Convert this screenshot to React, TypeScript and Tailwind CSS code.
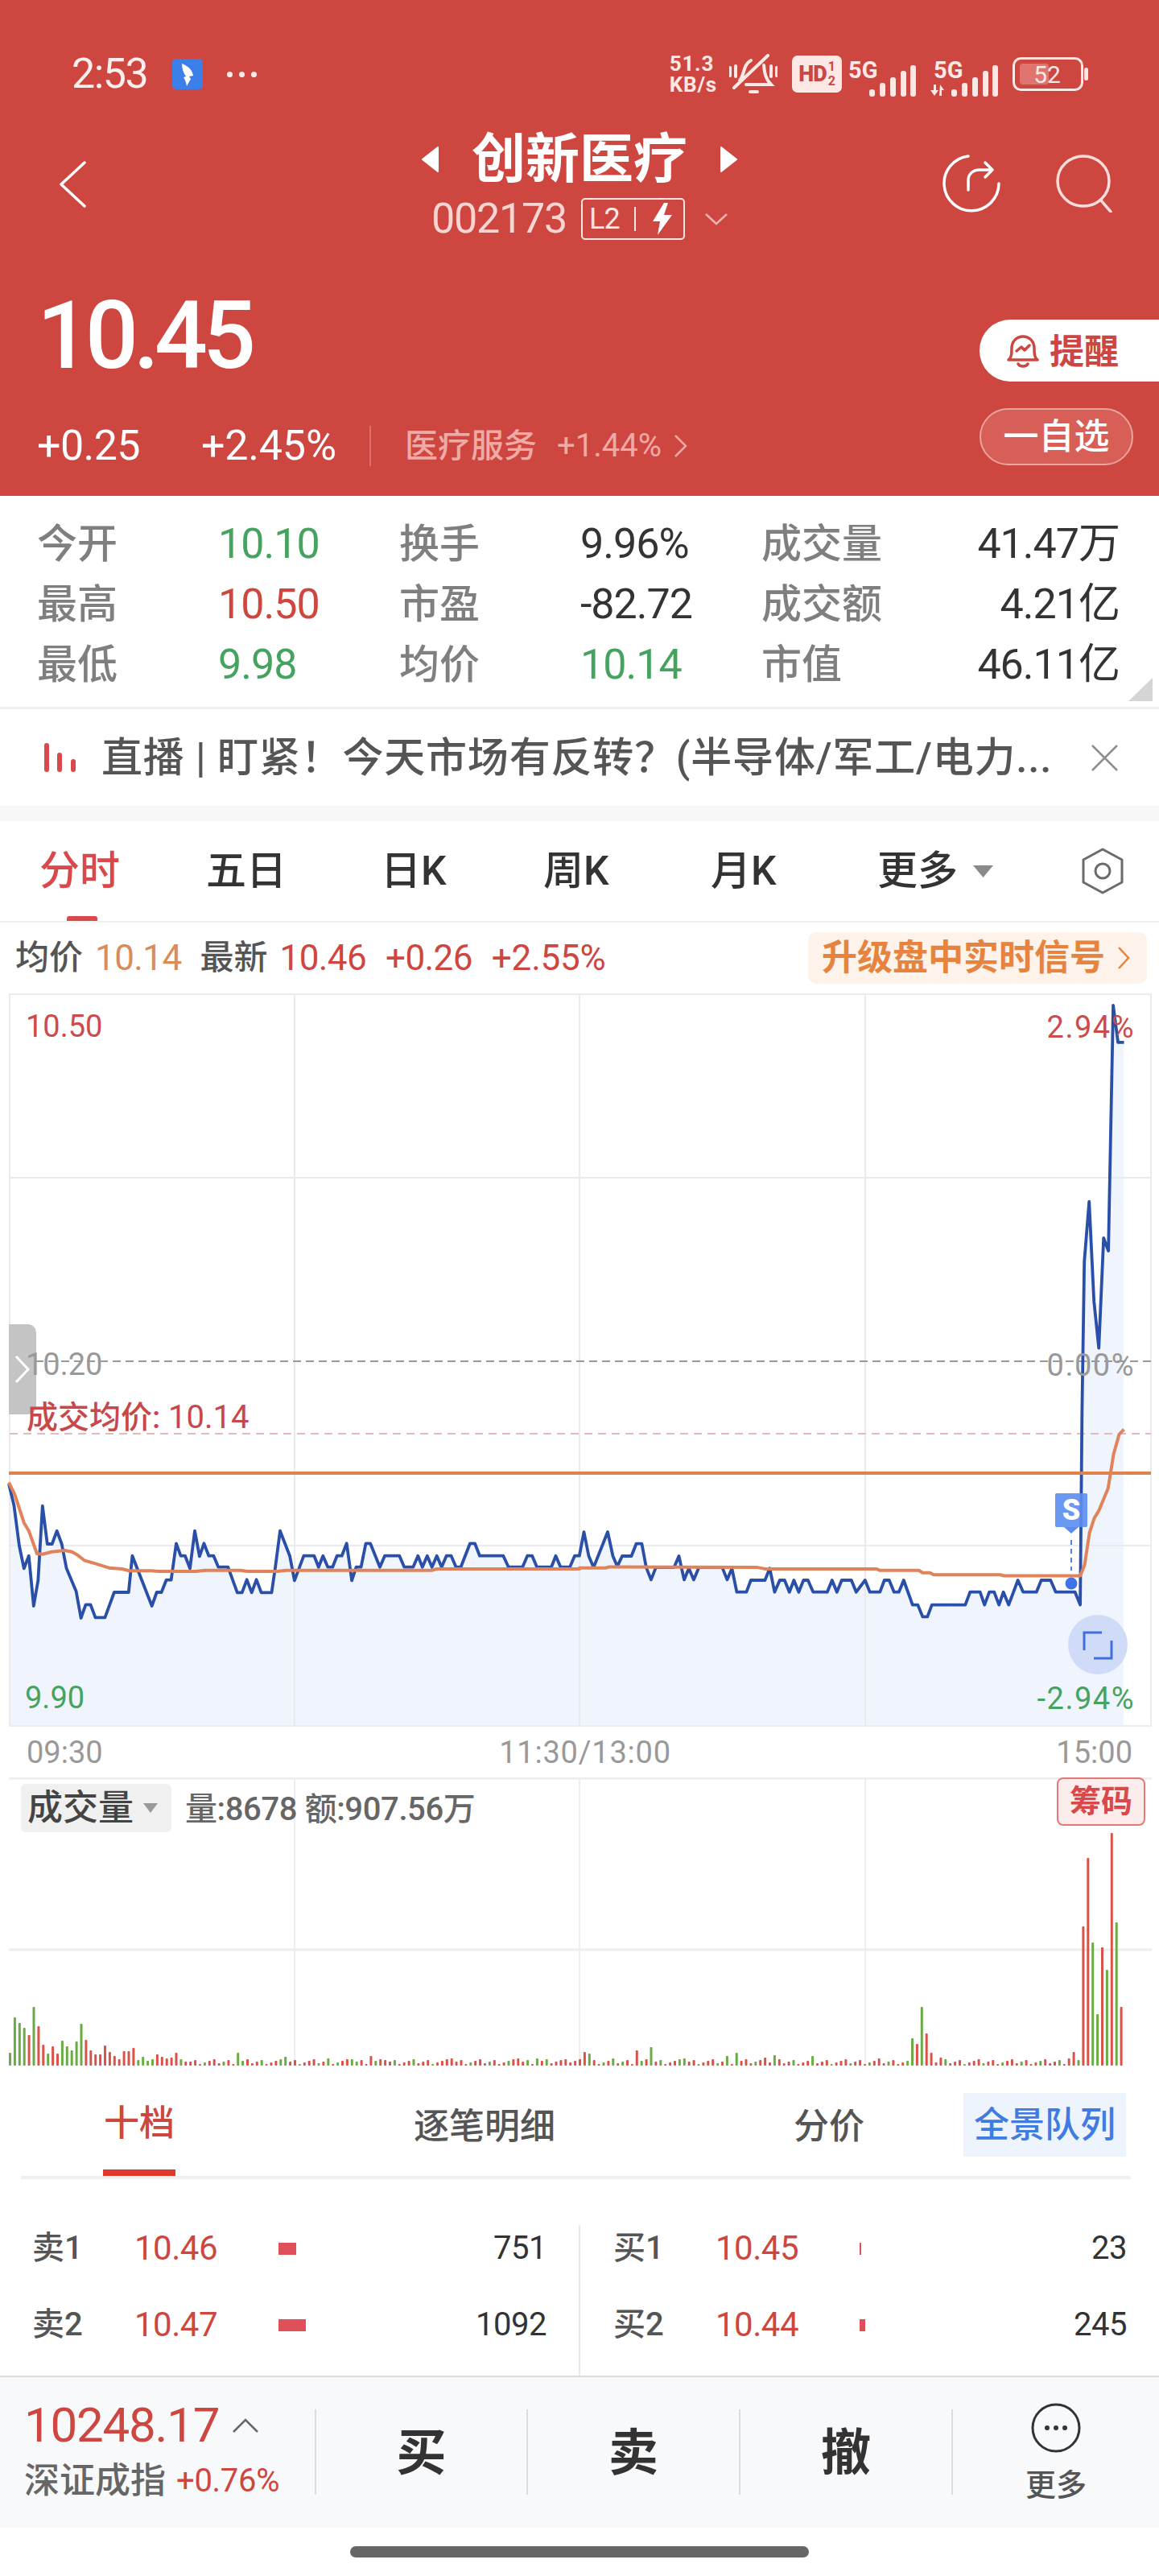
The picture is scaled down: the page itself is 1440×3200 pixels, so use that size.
import React from 'react'

const RED = '#cd463f'

// traced from the intraday chart, [x, y] in page pixels
const leftTrace = [
  [24, 190], [38, 270], [52, 420], [65, 505], [78, 458], [91, 645], [103, 550], [115, 272], [128, 414], [141, 414], [154, 365], [167, 414], [180, 505], [206, 590], [219, 690], [232, 640], [245, 640], [258, 688], [284, 688], [309, 594], [348, 594], [358, 458], [411, 645], [424, 594], [437, 594], [450, 548], [463, 548], [477, 412], [489, 458], [501, 458], [514, 505], [527, 365], [540, 460], [552, 412], [565, 458], [578, 458], [591, 500], [617, 500], [642, 595], [655, 595], [668, 547], [681, 595], [694, 547], [707, 595], [735, 595], [745, 500], [758, 365], [784, 458], [797, 550], [822, 458], [850, 458], [862, 500], [874, 458], [887, 500], [900, 500], [912, 458], [925, 458], [938, 412], [952, 550], [964, 500], [977, 500], [990, 412], [1002, 412], [1028, 500], [1041, 458], [1081, 458], [1094, 500], [1118, 500], [1131, 458], [1143, 500], [1156, 458], [1169, 500], [1182, 458], [1195, 500], [1208, 458], [1221, 458], [1234, 500], [1247, 500], [1272, 412], [1285, 412], [1298, 458], [1362, 458], [1376, 500], [1414, 500], [1427, 458], [1440, 458], [1453, 500], [1492, 500], [1504, 458], [1517, 500], [1542, 500], [1555, 458], [1568, 458],
].map(([x, y]) => [x / 2.178, 1780 + y / 3])

const rightTrace = [
  [0, 1195], [12, 1148], [25, 1197], [38, 1220], [76, 1148], [90, 1197], [102, 1218], [115, 1197], [140, 1197], [153, 1172], [168, 1172], [180, 1220], [193, 1245], [206, 1220], [255, 1220], [268, 1197], [282, 1245], [295, 1222], [308, 1245], [322, 1220], [385, 1220], [398, 1245], [411, 1222], [424, 1270], [450, 1270], [462, 1246], [500, 1246], [513, 1222], [526, 1270], [540, 1246], [553, 1246], [566, 1270], [578, 1246], [591, 1270], [604, 1246], [616, 1246], [630, 1270], [668, 1270], [681, 1246], [694, 1270], [707, 1246], [733, 1246], [746, 1270], [770, 1246], [783, 1270], [810, 1270], [822, 1246], [835, 1246], [848, 1270], [861, 1270], [874, 1246], [898, 1296], [912, 1296], [925, 1320], [938, 1320], [950, 1296], [1040, 1296], [1053, 1270], [1080, 1270], [1092, 1296], [1105, 1270], [1118, 1270], [1131, 1296], [1143, 1270], [1157, 1296], [1182, 1246], [1196, 1270], [1232, 1270], [1245, 1246], [1270, 1246], [1284, 1270], [1336, 1270], [1350, 1296], [1355, 900], [1361, 600], [1374, 478], [1387, 680], [1400, 775], [1413, 552], [1426, 578], [1439, 80], [1452, 155], [1468, 155],
].map(([x, y]) => [720 + x / 2.17, 1200 + y / 1.633])

const avgLeft = [
  [24, 185], [40, 230], [65, 335], [78, 365], [100, 450], [115, 452], [140, 443], [175, 438], [195, 443], [210, 455], [228, 475], [260, 488], [295, 503], [330, 507], [350, 514], [410, 514], [430, 516], [530, 516], [555, 512], [650, 512], [670, 516], [750, 516], [775, 512], [1170, 512], [1182, 507], [1568, 507],
].map(([x, y]) => [x / 2.178, 1780 + y / 3])

const avgRight = [
  [0, 1221], [70, 1221], [80, 1219], [480, 1220], [500, 1223], [800, 1223], [810, 1226], [915, 1226], [925, 1231], [945, 1231], [955, 1235], [1135, 1235], [1145, 1237], [1350, 1237], [1362, 1215], [1375, 1150], [1388, 1120], [1400, 1105], [1425, 1060], [1440, 990], [1455, 950], [1468, 940],
].map(([x, y]) => [720 + x / 2.17, 1200 + y / 1.633])

const toPoints = (pts: number[][]) => pts.map(([x, y]) => `${x.toFixed(1)},${y.toFixed(1)}`).join(' ')

const priceLine = [...leftTrace, ...rightTrace]
const avgLine = [...avgLeft, ...avgRight]

// [height, green?]
const openBars: [number, number][] = [
  [16, 1], [60, 1], [53, 1], [47, 1], [38, 0], [73, 1], [49, 0], [26, 0], [15, 1], [24, 0], [15, 0], [31, 1], [24, 1], [19, 1], [30, 1], [52, 1], [32, 0], [19, 0], [14, 0], [14, 0], [25, 0], [17, 0], [12, 0], [8, 0], [18, 0], [18, 0], [22, 0], [7, 1], [11, 1], [6, 1], [8, 1], [14, 0], [11, 0], [9, 0], [10, 0], [16, 0], [8, 1], [5, 0],
]

const spikes: Record<number, [number, number]> = {
  48: [16, 1], 58: [11, 1], 67: [9, 1], 72: [8, 1], 76: [12, 0], 79: [7, 0], 93: [9, 0], 107: [9, 0], 111: [9, 1], 117: [8, 0], 121: [17, 0], 122: [15, 1], 127: [9, 1], 132: [19, 0], 135: [23, 1], 142: [9, 1], 151: [12, 1], 153: [16, 1], 159: [10, 0], 161: [13, 1], 169: [12, 1], 183: [9, 0], 190: [34, 1], 191: [27, 0], 192: [73, 1], 193: [40, 0], 194: [16, 0], 196: [10, 0], 223: [9, 0], 224: [17, 0], 225: [7, 1], 226: [173, 0], 227: [258, 0], 228: [153, 1], 229: [64, 1], 230: [147, 0], 231: [119, 1], 232: [289, 0], 233: [178, 1], 234: [73, 0],
}

const volumeBars = Array.from({ length: 235 }, (_, i) => {
  if (i < openBars.length) return openBars[i]
  if (spikes[i]) return spikes[i]
  return [2 + ((i * 37 + 11) % 7), i % 4 === 1 ? 1 : 0] as [number, number]
})

const stats = [
  ['今开', '10.10', 'text-[#46a35f]', '换手', '9.96%', 'text-[#333333]', '成交量', '41.47万'],
  ['最高', '10.50', 'text-[#cd463f]', '市盈', '-82.72', 'text-[#333333]', '成交额', '4.21亿'],
  ['最低', '9.98', 'text-[#46a35f]', '均价', '10.14', 'text-[#46a35f]', '市值', '46.11亿'],
]

const asks = [
  { label: '卖1', price: '10.46', bar: 'w-[22px]', qty: '751' },
  { label: '卖2', price: '10.47', bar: 'w-[34px]', qty: '1092' },
]

const bids = [
  { label: '买1', price: '10.45', bar: 'w-[2px]', qty: '23' },
  { label: '买2', price: '10.44', bar: 'w-[7px]', qty: '245' },
]

function Signal({ arrows }: { arrows?: boolean }) {
  return (
    <svg className="mt-[8px]" width="84" height="58" viewBox="0 -8 84 58" fill="#fde8e6">
      <text x={arrows ? 4 : 0} y="22" fontSize="29" fontWeight="700" fontFamily="Roboto, sans-serif">5G</text>
      {arrows && <path d="M0 37h4v-7h3v7h3l-5 7zM12 30l5 7h-3v7h-3z" />}
      <rect x="26" y="36" width="7" height="9" rx="3" />
      <rect x="39" y="28" width="7" height="17" rx="3" />
      <rect x="52" y="21" width="7" height="24" rx="3" />
      <rect x="65" y="13" width="7" height="32" rx="3" />
      <rect x="77" y="6" width="7" height="39" rx="3" />
    </svg>
  )
}

function StatusBar() {
  return (
    <div className="flex h-[56px] items-center justify-between pl-[89px] pr-[88px]">
      <div className="flex items-center">
        <span className="text-[52px] leading-none tracking-[-1.5px] text-[#fdeeee]">2:53</span>
        <svg className="ml-[31px]" width="38" height="38" viewBox="0 0 38 38">
          <rect width="38" height="38" rx="5" fill="#3d7fe8" />
          <path d="M12 6c8 3 13 8 14 15l-5 1 2 3-5 9c-1-5-2-8-4-11l3-1c-3-4-5-10-5-16z" fill="#fff" />
        </svg>
        <div className="ml-[30px] flex gap-[8px]">
          <span className="size-[7px] rounded-full bg-[#fdeeee]" />
          <span className="size-[7px] rounded-full bg-[#fdeeee]" />
          <span className="size-[7px] rounded-full bg-[#fdeeee]" />
        </div>
      </div>
      <div className="flex items-center text-[#fde8e6]">
        <div className="flex flex-col text-[26px] font-bold leading-[26px] tracking-[0.8px]">
          <span>51.3</span>
          <span>KB/s</span>
        </div>
        <svg className="ml-[15px]" width="60" height="50" viewBox="0 0 60 50" fill="none" stroke="#fde8e6" strokeWidth="4" strokeLinecap="round">
          <path d="M6 42 48 2M13 33c6-6 4-20 14-25M43 14c1 10 2 17 9 24H21M26 47h9M1 17v10M8 15v13M52 15v13M59 17v10" />
        </svg>
        <div className="ml-[18px] flex h-[46px] w-[62px] items-center justify-center rounded-[7px] bg-[#fde8e6] text-[#cd463f]">
          <span className="text-[27px] font-black leading-none tracking-[-1px]">HD</span>
          <span className="ml-[2px] flex flex-col text-[16px] font-bold leading-[18px]">
            <span>1</span>
            <span>2</span>
          </span>
        </div>
        <div className="ml-[8px] flex">
          <Signal />
        </div>
        <div className="ml-[18px] flex">
          <Signal arrows />
        </div>
        <svg className="ml-[18px]" width="94" height="42" viewBox="0 0 94 42" fill="none">
          <rect x="1.5" y="1.5" width="85" height="39" rx="9" stroke="#fde8e6" strokeWidth="3" />
          <rect x="9" y="8" width="36" height="26" rx="4" fill="#e0756f" />
          <text x="43" y="32" textAnchor="middle" fontSize="30" fill="#fde8e6" fontFamily="Roboto, sans-serif">52</text>
          <rect x="89" y="13" width="5" height="16" rx="2.5" fill="#fde8e6" />
        </svg>
      </div>
    </div>
  )
}

function NavBar() {
  return (
    <div className="mt-[46px] grid h-[132px] grid-cols-[1fr_auto_1fr]">
      <div className="pl-[73px] pt-[34px]">
        <svg width="34" height="58" viewBox="0 0 34 58" fill="none" stroke="#fff" strokeWidth="3.5" strokeLinecap="round" strokeLinejoin="round">
          <path d="M32 2 3 29l29 27" />
        </svg>
      </div>
      <div className="flex flex-col items-center">
        <div className="flex h-[62px] items-center pt-[2px]">
          <svg width="22" height="32" viewBox="0 0 22 32" fill="#fff"><path d="M20 1 1 16l19 15z" stroke="#fff" strokeLinejoin="round" strokeWidth="2" /></svg>
          <span className="mx-[40px] text-[67px] font-bold leading-none">创新医疗</span>
          <svg width="22" height="32" viewBox="0 0 22 32" fill="#fff"><path d="M2 1l19 15L2 31z" stroke="#fff" strokeLinejoin="round" strokeWidth="2" /></svg>
        </div>
        <div className="mt-[18px] flex items-center">
          <span className="text-[52px] leading-none tracking-[-1.2px] text-[#f8d5d2]">002173</span>
          <div className="ml-[18px] flex h-[52px] w-[129px] items-center rounded-[5px] border-2 border-[#fde8e6] pl-[8px] text-[#fde8e6]">
            <span className="text-[36px] leading-none tracking-[-1px]">L2</span>
            <span className="ml-[18px] h-[30px] w-[2px] bg-[#fde8e6]" />
            <svg className="ml-[20px]" width="26" height="40" viewBox="0 0 26 40" fill="#fff"><path d="M15 0 1 23h9l-3 17 18-25h-10l5-15z" /></svg>
          </div>
          <svg className="ml-[25px]" width="28" height="15" viewBox="0 0 28 15" fill="none" stroke="#f0b3ae" strokeWidth="2.5"><path d="m1 1 13 12L27 1" /></svg>
        </div>
      </div>
      <div className="flex justify-end gap-[69px] pr-[58px] pt-[26px]">
        <svg width="74" height="72" viewBox="0 0 74 72" fill="none" stroke="#fff" strokeWidth="3.5" strokeLinecap="round" strokeLinejoin="round">
          <path d="M34 2A34 34 0 1 0 72 36" />
          <path d="M34 44V32c0-8 6-13 14-13h16M55 10l9 9-9 9" />
        </svg>
        <svg width="70" height="72" viewBox="0 0 70 72" fill="none" stroke="#fbdcda" strokeWidth="3.5" strokeLinecap="round">
          <ellipse cx="34" cy="33" rx="32" ry="31" />
          <path d="m56 57 12 14" />
        </svg>
      </div>
    </div>
  )
}

function QuoteHeader() {
  return (
    <div className="mt-[66px] flex justify-between">
      <div className="pl-[46px]">
        <div className="h-[106px] text-[116px] font-medium leading-[106px] tracking-[-6px]">10.45</div>
        <div className="mt-[59px] flex h-[50px] items-center">
          <span className="w-[204px] text-[52px] leading-none tracking-[-0.6px]">+0.25</span>
          <span className="w-[209px] text-[52px] leading-none tracking-[-0.2px]">+2.45%</span>
          <span className="h-[50px] w-[2px] bg-[#dd706a]" />
          <span className="ml-[42px] text-[41px] font-medium leading-none text-[#efaaa5]">医疗服务</span>
          <span className="ml-[25px] text-[40px] leading-none text-[#efaaa5]">+1.44%</span>
          <svg className="ml-[16px]" width="16" height="28" viewBox="0 0 16 28" fill="none" stroke="#efaaa5" strokeWidth="2.5"><path d="m1 1 13 13L1 27" /></svg>
        </div>
      </div>
      <div className="flex w-[223px] flex-col items-start pt-[33px]">
        <div className="flex h-[77px] w-full items-center rounded-l-[38px] bg-white pl-[32px]">
          <svg width="44" height="42" viewBox="0 0 44 42" fill="none" stroke="#cd463f" strokeWidth="3.5" strokeLinejoin="round" strokeLinecap="round">
            <path d="M4 32c4-3 4-8 4-14 0-9 6-15 14-15s14 6 14 15c0 6 0 11 4 14zM16 37c2 4 10 4 12 0M14 21l6-5 4 4 6-6" />
          </svg>
          <span className="ml-[11px] mt-[4px] text-[43px] font-bold leading-none text-[#cd463f]">提醒</span>
        </div>
        <div className="mt-[33px] flex h-[71px] w-[191px] items-center justify-center rounded-full border-2 border-[#eba5a0] bg-[#d85f58] text-[44px] font-medium leading-none">
          一自选
        </div>
      </div>
    </div>
  )
}

function Stats() {
  return (
    <div className="relative h-[265px] border-b-[3px] border-[#f0f0f0] bg-white pl-[46px] pr-[49px] pt-[22px]">
      {stats.map((row) => (
        <div key={row[0]} className="grid h-[75px] grid-cols-[225px_225px_225px_225px_1fr_auto] items-center text-[52px] leading-none tracking-[-1px]">
          <span className="text-[50px] font-medium tracking-normal text-[#7f7f7f]">{row[0]}</span>
          <span className={row[2]}>{row[1]}</span>
          <span className="text-[50px] font-medium tracking-normal text-[#7f7f7f]">{row[3]}</span>
          <span className={row[5]}>{row[4]}</span>
          <span className="text-[50px] font-medium tracking-normal text-[#7f7f7f]">{row[6]}</span>
          <span className="text-right text-[#333333]">{row[7]}</span>
        </div>
      ))}
      <svg className="absolute bottom-[7px] right-[8px]" width="30" height="29" viewBox="0 0 30 29" fill="#d5d5d5">
        <path d="M30 0v29H0z" />
      </svg>
    </div>
  )
}

function NewsBar() {
  return (
    <div className="flex h-[120px] items-center bg-white pl-[55px]">
      <svg width="40" height="36" viewBox="0 0 40 36" fill="#d9484a">
        <rect x="0" width="6" height="36" rx="3" />
        <rect x="16" y="12" width="6" height="24" rx="3" />
        <rect x="33" y="20" width="6" height="16" rx="3" />
      </svg>
      <span className="ml-[31px] w-[1190px] whitespace-nowrap text-[51px] font-medium leading-none tracking-[0.8px] text-[#555555]">
        直播 | 盯紧！今天市场有反转？(半导体/军工/电力...
      </span>
      <svg className="ml-[40px]" width="33" height="33" viewBox="0 0 33 33" fill="none" stroke="#8e8e8e" strokeWidth="2.5">
        <path d="m1 1 31 31M32 1 1 32" />
      </svg>
    </div>
  )
}

function PeriodTabs() {
  return (
    <div className="relative grid h-[126px] grid-cols-[207px_217px_202px_208px_207px_250px_auto] items-center border-b-2 border-[#eeeeee] bg-white pl-[49px] text-[50px] font-medium leading-none text-[#333333]">
      <span className="text-[#d9484a]">分时</span>
      <span>五日</span>
      <span>日K</span>
      <span>周K</span>
      <span>月K</span>
      <span className="flex items-center">
        更多
        <svg className="ml-[19px]" width="25" height="15" viewBox="0 0 25 15" fill="#8a8a8a"><path d="M0 0h25L12.5 15z" /></svg>
      </span>
      <svg className="ml-[3px]" width="54" height="58" viewBox="0 0 54 58" fill="none" stroke="#6b6b6b" strokeWidth="3" strokeLinejoin="round">
        <path d="M27 2 51 15v28L27 56 3 43V15z" />
        <circle cx="27" cy="29" r="9" />
      </svg>
      <span className="absolute bottom-0 left-[83px] h-[6px] w-[38px] rounded-t-[3px] bg-[#d9484a]" />
    </div>
  )
}

function QuoteLine() {
  return (
    <div className="flex h-[88px] items-center justify-between pl-[19px] pr-[15px] text-[42px] leading-none">
      <div className="flex items-center">
        <span className="font-medium text-[#555555]">均价</span>
        <span className="ml-[15px] text-[44px] tracking-[-0.6px] text-[#d98c58]">10.14</span>
        <span className="ml-[23px] font-medium text-[#555555]">最新</span>
        <span className="ml-[15px] text-[44px] tracking-[-0.6px] text-[#cd463f]">10.46</span>
        <span className="ml-[24px] text-[44px] tracking-[-0.6px] text-[#cd463f]">+0.26</span>
        <span className="ml-[24px] text-[44px] tracking-[-0.2px] text-[#cd463f]">+2.55%</span>
      </div>
      <div className="flex h-[64px] w-[421px] items-center rounded-[10px] bg-[#fdf3ea] pl-[17px] text-[44px] font-bold text-[#e6843f]">
        升级盘中实时信号
        <svg className="ml-[16px]" width="15" height="28" viewBox="0 0 15 28" fill="none" stroke="#e6843f" strokeWidth="2.5"><path d="m1 1 12 13L1 27" /></svg>
      </div>
    </div>
  )
}

function IntradayChart() {
  const fillPath = `11,2144 ${toPoints(priceLine)} 1396,2144`
  return (
    <div className="relative h-[911px] bg-white">
      <svg className="block" width="1440" height="911" viewBox="0 1234 1440 911" fill="none">
        <polygon points={fillPath} fill="#eff4fd" />
        <rect x="12" y="1235" width="1418" height="909" stroke="#ececec" strokeWidth="2" />
        <path d="M366 1235v909M720 1235v909M1075 1235v909M12 1463h1418M12 1920h1418" stroke="#e8eaee" strokeWidth="2" />
        <path d="M12 1691h1418" stroke="#999999" strokeWidth="2" strokeDasharray="10 6" />
        <path d="M12 1781h1418" stroke="#e3b9b9" strokeWidth="2" strokeDasharray="10 7" />
        <polyline points={toPoints(priceLine)} stroke="#2a4fa8" strokeWidth="3.8" strokeLinejoin="round" />
        <path d="M11 1830h1419" stroke="#e0834a" strokeWidth="4" />
        <polyline points={toPoints(avgLine)} stroke="#e0835a" strokeWidth="4" strokeLinejoin="round" />
        <path d="M1322 1897h18l-9 8z" fill="#5b8def" />
        <path d="M1331 1913v38" stroke="#4f7fe8" strokeWidth="2" strokeDasharray="6 5" />
        <ellipse cx="1331" cy="1967" rx="7.5" ry="7.5" fill="#3f73e8" />
        <circle cx="1364" cy="2043" r="37" fill="#d0dcf7" />
        <path d="M1347 2050v-22h22M1381 2038v22h-22" stroke="#3f6fe0" strokeWidth="3" />
      </svg>
      <span className="absolute left-[32px] top-[22px] text-[38px] leading-none text-[#cd4a4d]">10.50</span>
      <span className="absolute right-[30px] top-[23px] text-[38px] leading-none tracking-[1.5px] text-[#cd4a4d]">2.94%</span>
      <span className="absolute left-[11px] top-[411px] flex h-[112px] w-[34px] items-center justify-center rounded-r-[10px] bg-[#c4c4c4]">
        <svg width="20" height="36" viewBox="0 0 20 36" fill="none" stroke="#fff" strokeWidth="3"><path d="m2 2 15 16L2 34" /></svg>
      </span>
      <span className="absolute left-[32px] top-[442px] text-[38px] leading-none text-[#999999]">10.20</span>
      <span className="absolute right-[30px] top-[443px] text-[38px] leading-none tracking-[1.5px] text-[#999999]">0.00%</span>
      <span className="absolute left-[33px] top-[507px] text-[39px] font-medium leading-none text-[#c8474a]">
        成交均价: <span className="text-[40px] font-normal">10.14</span>
      </span>
      <span className="absolute left-[1311px] top-[621px] flex h-[42px] w-[40px] items-center justify-center rounded-[2px] bg-[#5b8def]/90 text-[36px] font-black leading-none text-white">
        S
      </span>
      <span className="absolute left-[31px] top-[856px] text-[38px] leading-none text-[#46a35f]">9.90</span>
      <span className="absolute right-[30px] top-[857px] text-[38px] leading-none tracking-[1.5px] text-[#46a35f]">-2.94%</span>
    </div>
  )
}

function TimeAxis() {
  return (
    <div className="flex h-[63px] items-center justify-between bg-white pl-[33px] pr-[33px] text-[38px] leading-none text-[#999999]">
      <span>09:30</span>
      <span className="ml-[14px] tracking-[0.8px]">11:30/13:00</span>
      <span>15:00</span>
    </div>
  )
}

function VolumeChart() {
  return (
    <div className="relative h-[358px] bg-white">
      <svg className="block" width="1440" height="358" viewBox="0 2208 1440 358" fill="none">
        <path d="M11 2209h1420M11 2422h1420" stroke="#eeeeee" strokeWidth="3" />
        <path d="M366 2208v358M720 2208v358M1075 2208v358" stroke="#eeeeee" strokeWidth="2" />
        {volumeBars.map(([h, green], i) => (
          <rect key={i} x={11 + i * 5.9} y={2566 - h} width="3" height={h} rx="1" fill={green ? '#6aab45' : '#d9534a'} />
        ))}
      </svg>
      <div className="absolute left-[26px] top-[8px] flex h-[60px] w-[187px] items-center rounded-[6px] bg-[#f0f0f0] pl-[8px] text-[44px] font-medium leading-none text-[#444444]">
        成交量
        <svg className="ml-[12px]" width="18" height="12" viewBox="0 0 18 12" fill="#999999"><path d="M0 0h18L9 12z" /></svg>
      </div>
      <span className="absolute left-[230px] top-[20px] text-[40px] font-medium leading-none tracking-[-0.4px] text-[#666666]">量:8678 额:907.56万</span>
      <span className="absolute left-[1313px] top-0 flex h-[60px] w-[110px] items-center justify-center rounded-[8px] border-2 border-[#e57777] bg-[#fdecec] text-[39px] font-bold leading-none text-[#d9484a]">
        筹码
      </span>
    </div>
  )
}

function DepthTabs() {
  return (
    <div className="h-[141px] bg-white pt-[34px]">
      <div className="ml-[26px] mr-[35px] flex h-[107px] items-start border-b-4 border-[#f0f0f0] pl-[102px] text-[44px] font-medium leading-none text-[#555555]">
        <span className="flex h-[103px] w-[90px] justify-center border-b-8 border-[#e0392b] pt-[16px] text-[#cd463f]">十档</span>
        <span className="ml-[296px] mt-[20px] w-[175px] whitespace-nowrap">逐笔明细</span>
        <span className="ml-[297px] mt-[20px] w-[84px] whitespace-nowrap">分价</span>
        <span className="ml-[127px] flex h-[79px] w-[202px] items-center justify-center bg-[#eef4fd] text-[#3f7be0]">全景队列</span>
      </div>
    </div>
  )
}

function DepthRow({ row }: { row: { label: string; price: string; bar: string; qty: string } }) {
  return (
    <div className="grid h-[58px] grid-cols-[127px_179px_1fr_auto] items-center leading-none">
      <span className="text-[40px] font-medium text-[#555555]">{row.label}</span>
      <span className="text-[42px] tracking-[-0.5px] text-[#cd463f]">{row.price}</span>
      <span className={`h-[15px] bg-[#e0505a] ${row.bar}`} />
      <span className="text-[40px] tracking-[-0.5px] text-[#333333]">{row.qty}</span>
    </div>
  )
}

function Depth() {
  return (
    <div className="flex h-[244px] bg-white pt-[57px]">
      <div className="flex w-[721px] flex-col gap-[37px] border-r-2 border-[#e8e8e8] pl-[40px] pr-[40px]">
        {asks.map((row) => (
          <DepthRow key={row.label} row={row} />
        ))}
      </div>
      <div className="flex flex-1 flex-col gap-[37px] pl-[41px] pr-[40px]">
        {bids.map((row) => (
          <DepthRow key={row.label} row={row} />
        ))}
      </div>
    </div>
  )
}

function ActionBar() {
  return (
    <div className="flex h-[189px] items-start border-t-2 border-[#dddddd] bg-[#f8f9fb] pt-[40px]">
      <div className="flex h-[106px] w-[391px] flex-col pl-[30px]">
        <div className="-mt-[9px] flex items-center">
          <span className="text-[60px] leading-[58px] tracking-[-1.2px] text-[#cd463f]">10248.17</span>
          <svg className="ml-[17px]" width="32" height="18" viewBox="0 0 32 18" fill="none" stroke="#666666" strokeWidth="2.5"><path d="m1 17 15-15 15 15" /></svg>
        </div>
        <div className="mt-[18px] flex items-center leading-none">
          <span className="text-[44px] font-medium text-[#666666]">深证成指</span>
          <span className="ml-[13px] text-[40px] tracking-[-0.3px] text-[#cd463f]">+0.76%</span>
        </div>
      </div>
      <div className="flex h-[106px] w-[263px] items-center justify-center border-l-2 border-[#dddddd] pt-[4px] text-[62px] font-bold leading-none text-[#333333]">买</div>
      <div className="flex h-[106px] w-[264px] items-center justify-center border-l-2 border-[#dddddd] pt-[4px] text-[62px] font-bold leading-none text-[#333333]">卖</div>
      <div className="flex h-[106px] w-[264px] items-center justify-center border-l-2 border-[#dddddd] pt-[4px] text-[62px] font-bold leading-none text-[#333333]">撤</div>
      <div className="flex h-[106px] flex-1 flex-col items-center border-l-2 border-[#dddddd]">
        <svg className="-mt-[8px] shrink-0" width="62" height="62" viewBox="0 0 62 62" fill="none">
          <circle cx="31" cy="31" r="29" stroke="#333333" strokeWidth="3" />
          <circle cx="20" cy="31" r="3" fill="#333333" />
          <circle cx="31" cy="31" r="3" fill="#333333" />
          <circle cx="42" cy="31" r="3" fill="#333333" />
        </svg>
        <span className="mt-[21px] shrink-0 text-[38px] font-medium leading-none text-[#555555]">更多</span>
      </div>
    </div>
  )
}

export default function App() {
  return (
    <div className="h-[3200px] w-[1440px] overflow-hidden bg-white font-['Roboto','Noto_Sans_CJK_SC',sans-serif]">
      <header className="h-[616px] pt-[64px] text-white" style={{ backgroundColor: RED }}>
        <StatusBar />
        <NavBar />
        <QuoteHeader />
      </header>
      <Stats />
      <NewsBar />
      <div className="h-[19px] bg-[#f7f7f7]" />
      <PeriodTabs />
      <QuoteLine />
      <IntradayChart />
      <TimeAxis />
      <VolumeChart />
      <DepthTabs />
      <Depth />
      <ActionBar />
      <div className="flex h-[60px] justify-center bg-white pt-[23px]">
        <span className="h-[14px] w-[570px] rounded-full bg-[#666666]" />
      </div>
    </div>
  )
}
